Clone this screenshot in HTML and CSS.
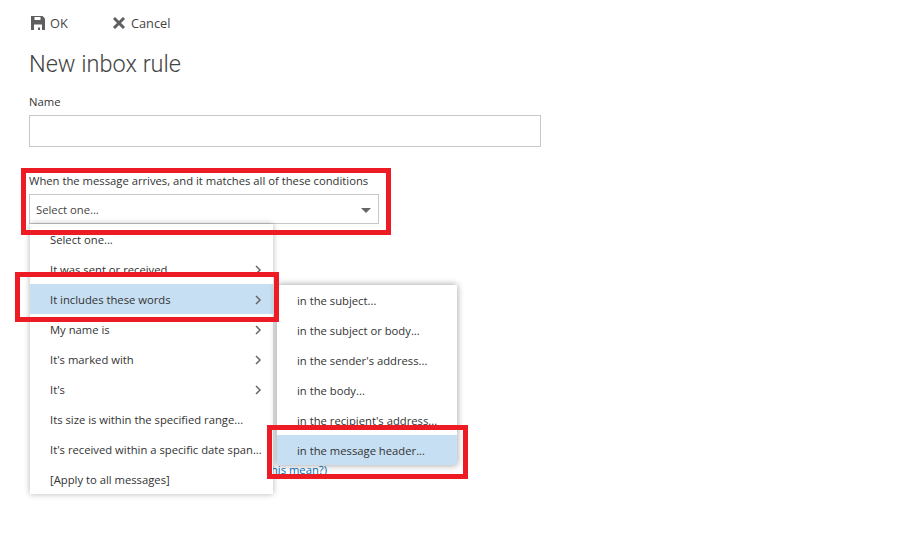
FILE: index.html
```html
<!DOCTYPE html>
<html lang="en">
<head>
<meta charset="utf-8">
<title>New inbox rule</title>
<link rel="stylesheet" href="styles.css">
</head>
<body>
<div class="page">
  <div class="toolbar">
    <span class="action ok">
      <svg class="icon" viewBox="0 0 14 14" width="14" height="14"><path fill="#5f5f5f" d="M0 0h11.500L14 2.500V14H0z"/><path fill="#fff" d="M3.500 1h6v3h-6z"/><path fill="#fff" d="M3 8.500h8V14H3z"/><path fill="#5f5f5f" d="M7 11.500h2V14H7z"/></svg>
      <span>OK</span>
    </span>
    <span class="action">
      <svg class="icon" viewBox="0 0 12 12" width="12" height="12"><path fill="none" stroke="#5f5f5f" stroke-width="3" d="M1 1l10 10M11 1L1 11"/></svg>
      <span>Cancel</span>
    </span>
  </div>
  <h1 class="title">New inbox rule</h1>
  <label class="label name-label">Name</label>
  <div class="input"></div>
  <label class="label cond-label">When the message arrives, and it matches all of these conditions</label>
  <div class="select">
    <span>Select one...</span>
    <span class="caret"></span>
  </div>
  <a class="help">(What does this mean?)</a>

  <ul class="menu main-menu">
    <li class="item">Select one...</li>
    <li class="item has-sub">It was sent or received<svg class="chev" viewBox="0 0 7 10" width="7" height="10"><path d="M1 1l4 4-4 4" fill="none" stroke="#666" stroke-width="1.500"/></svg></li>
    <li class="item has-sub active">It includes these words<svg class="chev" viewBox="0 0 7 10" width="7" height="10"><path d="M1 1l4 4-4 4" fill="none" stroke="#666" stroke-width="1.500"/></svg></li>
    <li class="item has-sub">My name is<svg class="chev" viewBox="0 0 7 10" width="7" height="10"><path d="M1 1l4 4-4 4" fill="none" stroke="#666" stroke-width="1.500"/></svg></li>
    <li class="item has-sub">It's marked with<svg class="chev" viewBox="0 0 7 10" width="7" height="10"><path d="M1 1l4 4-4 4" fill="none" stroke="#666" stroke-width="1.500"/></svg></li>
    <li class="item has-sub">It's<svg class="chev" viewBox="0 0 7 10" width="7" height="10"><path d="M1 1l4 4-4 4" fill="none" stroke="#666" stroke-width="1.500"/></svg></li>
    <li class="item">Its size is within the specified range...</li>
    <li class="item">It's received within a specific date span...</li>
    <li class="item">[Apply to all messages]</li>
  </ul>

  <ul class="menu sub-menu">
    <li class="item">in the subject...</li>
    <li class="item">in the subject or body...</li>
    <li class="item">in the sender's address...</li>
    <li class="item">in the body...</li>
    <li class="item">in the recipient's address...</li>
    <li class="item active">in the message header...</li>
  </ul>

  <div class="mark mark-cond"></div>
  <div class="mark mark-words"></div>
  <div class="mark mark-header"></div>
</div>
</body>
</html>
```
FILE: styles.css
```css
* { box-sizing: border-box; }
html, body { margin: 0; padding: 0; background: #fff; }
body {
  font-family: "Open Sans", "Noto Sans", "Liberation Sans", sans-serif;
  font-size: 11.25px;
  color: #333;
}
.page {
  position: relative;
  width: 920px;
  height: 560px;
  overflow: hidden;
  padding: 0 0 0 29px;
}
.toolbar {
  display: flex;
  align-items: center;
  height: 30px;
  padding: 15px 0 0 2px;
  font-size: 12.75px;
  color: #444;
}
.action { display: flex; align-items: center; gap: 6px; }
.ok { width: 82px; gap: 5px; }
.title {
  margin: 14px 0 0 0;
  height: 40px;
  line-height: 40px;
  font-family: Roboto, "Open Sans", sans-serif;
  font-size: 23.5px;
  font-weight: 300;
  color: #444;
}
.label { display: block; line-height: 16px; }
.name-label { margin-top: 10px; }
.input {
  width: 512px;
  height: 32px;
  margin-top: 5px;
  border: 1px solid #c8c8c8;
}
.cond-label { margin-top: 26px; }
.select {
  display: flex;
  align-items: center;
  justify-content: space-between;
  width: 350px;
  height: 30px;
  margin-top: 5px;
  padding: 0 7px 0 6px;
  border: 1px solid #c8c8c8;
  color: #444;
}
.caret {
  width: 0;
  height: 0;
  margin-top: 2px;
  border-left: 5.500px solid transparent;
  border-right: 5.500px solid transparent;
  border-top: 5px solid #666;
}
.help {
  display: block;
  width: 298px;
  margin-top: 238px;
  text-align: right;
  line-height: 16px;
  color: #0072c6;
}
.menu {
  position: absolute;
  margin: 0;
  padding: 0;
  list-style: none;
  background: #fff;
  box-shadow: 0 0 6px rgba(0, 0, 0, 0.3);
}
.main-menu { left: 30px; top: 224px; width: 243px; }
.sub-menu { left: 277px; top: 285px; width: 180px; box-shadow: 0 0 7px rgba(0, 0, 0, 0.4); }
.item {
  position: relative;
  height: 30px;
  line-height: 30px;
  padding: 1px 0 0 20px;
  white-space: nowrap;
}
.active { background: #c7dff2; }
.chev { position: absolute; right: 11px; top: 11px; }
.mark { position: absolute; border: 5px solid #ed1c24; }
.mark-cond { left: 21px; top: 168px; width: 370px; height: 67px; }
.mark-words { left: 15px; top: 272px; width: 264px; height: 50px; }
.mark-header { left: 267px; top: 425px; width: 201px; height: 54px; }
```
